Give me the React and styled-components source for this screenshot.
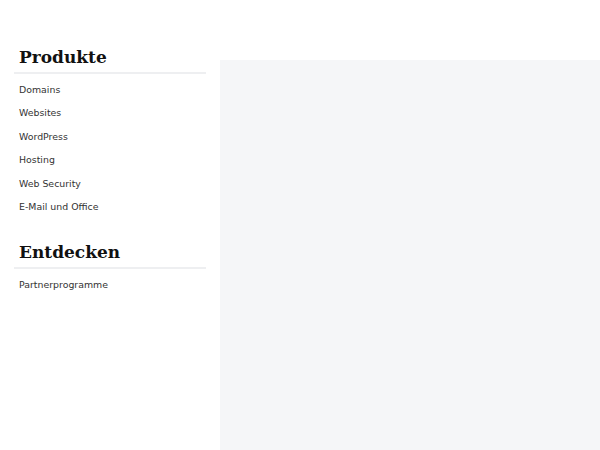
import React from "react";
import styled, { createGlobalStyle } from "styled-components";

const Global = createGlobalStyle`
  html, body { margin: 0; padding: 0; background: #ffffff; }
  body { font-family: "DejaVu Sans", sans-serif; }
`;

const Page = styled.div`
  display: flex;
  align-items: flex-start;
  width: 600px;
  height: 450px;
  overflow: hidden;
`;

const Sidebar = styled.nav`
  width: 192px;
  margin: 46px 14px 0 14px;
  display: flex;
  flex-direction: column;
`;

const Section = styled.section`
  display: flex;
  flex-direction: column;
  margin-bottom: ${(p) => p.$gap || 0}px;
`;

const Heading = styled.h2`
  margin: 0;
  padding: 1px 5px 4px;
  font-family: "DejaVu Serif", serif;
  font-weight: bold;
  font-size: 17px;
  line-height: 21px;
  color: #111;
  border-bottom: 2px solid #eeeff1;
`;

const List = styled.ul`
  list-style: none;
  margin: 0;
  padding: 4px 5px 0;
`;

const Item = styled.li`
  font-size: 9.4px;
  line-height: 23.4px;
  color: #333;
`;

const Main = styled.main`
  flex: 1;
  margin-top: 60px;
  height: 390px;
  background: #f5f6f8;
`;

export default function App() {
  return (
    <>
      <Global />
      <Page>
        <Sidebar>
          <Section $gap={23}>
            <Heading>Produkte</Heading>
            <List>
              <Item>Domains</Item>
              <Item>Websites</Item>
              <Item>WordPress</Item>
              <Item>Hosting</Item>
              <Item>Web Security</Item>
              <Item>E-Mail und Office</Item>
            </List>
          </Section>
          <Section>
            <Heading>Entdecken</Heading>
            <List>
              <Item>Partnerprogramme</Item>
            </List>
          </Section>
        </Sidebar>
        <Main />
      </Page>
    </>
  );
}
